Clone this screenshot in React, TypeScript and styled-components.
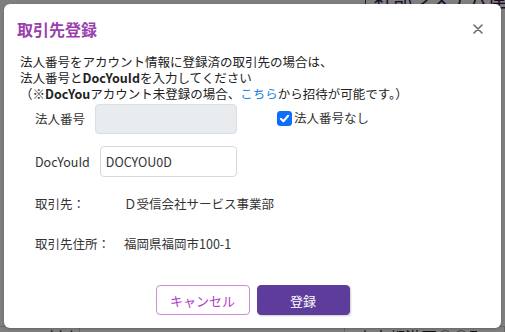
import React, { useState } from 'react';
import styled, { createGlobalStyle } from 'styled-components';

const GlobalStyle = createGlobalStyle`
    * {
        box-sizing: border-box;
    }
    html, body {
        margin: 0;
        padding: 0;
        width: 505px;
        height: 332px;
        overflow: hidden;
        font-family: 'Noto Sans CJK JP', 'Noto Sans', sans-serif;
    }
`;

const App: React.FC = () => {
    const [noCorpNumber, setNoCorpNumber] = useState(true);
    const [docYouId, setDocYouId] = useState('DOCYOU0D');

    return (
        <Page>
            <GlobalStyle />
            <BackPage>
                <BackHeader>
                    <BackTitle>社部システム連携</BackTitle>
                </BackHeader>
                <BackSpacer />
                <BackRow>
                    <BackCell $width={80}>コン 村山 様</BackCell>
                    <BackCell $width={265}></BackCell>
                    <BackCell $width={160}>東京都港区○○町</BackCell>
                </BackRow>
            </BackPage>
            <Overlay>
                <Modal>
                    <ModalHeader>
                        <ModalTitle>取引先登録</ModalTitle>
                        <CloseButton aria-label="閉じる">
                            <svg width="10" height="10" viewBox="0 0 10 10">
                                <path
                                    d="M1 1 L9 9 M9 1 L1 9"
                                    stroke="#6b6b6b"
                                    strokeWidth="1.6"
                                    strokeLinecap="round"
                                />
                            </svg>
                        </CloseButton>
                    </ModalHeader>
                    <ModalBody>
                        <Intro>
                            <p>法人番号をアカウント情報に登録済の取引先の場合は、</p>
                            <p>
                                法人番号と<b>DocYouId</b>を入力してください
                            </p>
                            <p>
                                （※<b>DocYou</b>アカウント未登録の場合、
                                <InviteLink href="#">こちら</InviteLink>
                                から招待が可能です。）
                            </p>
                        </Intro>
                        <FormArea>
                            <FieldRow $top={2}>
                                <FieldLabel>法人番号</FieldLabel>
                                <TextInput disabled value="" onChange={() => {}} />
                            </FieldRow>
                            <CheckLabel>
                                <HiddenCheck
                                    type="checkbox"
                                    checked={noCorpNumber}
                                    onChange={(e) => setNoCorpNumber(e.target.checked)}
                                />
                                <CheckBox $checked={noCorpNumber}>
                                    {noCorpNumber && (
                                        <svg width="11" height="11" viewBox="0 0 12 12">
                                            <path
                                                d="M2 6.3 L4.8 9 L10 3"
                                                fill="none"
                                                stroke="#ffffff"
                                                strokeWidth="2.2"
                                                strokeLinecap="round"
                                                strokeLinejoin="round"
                                            />
                                        </svg>
                                    )}
                                </CheckBox>
                                法人番号なし
                            </CheckLabel>
                            <FieldRow $top={12}>
                                <FieldLabel>DocYouId</FieldLabel>
                                <TextInput
                                    $tall
                                    value={docYouId}
                                    onChange={(e) => setDocYouId(e.target.value)}
                                />
                            </FieldRow>
                        </FormArea>
                        <InfoList>
                            <InfoRow $top={19}>
                                <InfoLabel>取引先：</InfoLabel>
                                <InfoValue>Ｄ受信会社サービス事業部</InfoValue>
                            </InfoRow>
                            <InfoRow $top={24}>
                                <InfoLabel>取引先住所：</InfoLabel>
                                <InfoValue>福岡県福岡市100-1</InfoValue>
                            </InfoRow>
                        </InfoList>
                    </ModalBody>
                    <ModalFooter>
                        <CancelButton>キャンセル</CancelButton>
                        <PrimaryButton>登録</PrimaryButton>
                    </ModalFooter>
                </Modal>
            </Overlay>
        </Page>
    );
};

export default App;

const Page = styled.div`
    position: relative;
    width: 505px;
    height: 332px;
    overflow: hidden;
    background-color: #ffffff;
`;

const BackPage = styled.div`
    display: flex;
    flex-direction: column;
    height: 100%;
`;

const BackHeader = styled.div`
    display: flex;
    justify-content: flex-end;
    height: 6px;
    overflow: visible;
`;

const BackTitle = styled.div`
    margin-top: -11px;
    padding: 0 0 0 8px;
    width: 140px;
    border-left: 1px solid #444;
    font-size: 19px;
    line-height: 20px;
    color: #3a0f52;
    white-space: nowrap;
`;

const BackSpacer = styled.div`
    flex: 1;
`;

const BackRow = styled.div`
    display: flex;
    height: 6px;
    border-top: 1px solid #cccccc;
`;

interface BackCellProps {
    $width: number;
}

const BackCell = styled.div<BackCellProps>`
    width: ${(props) => props.$width}px;
    padding-left: 12px;
    border-right: 1px solid #cccccc;
    font-size: 16px;
    line-height: 20px;
    color: #222;
    white-space: nowrap;
    overflow: hidden;
`;

const Overlay = styled.div`
    position: absolute;
    inset: 0;
    display: flex;
    justify-content: center;
    align-items: center;
    background-color: rgba(0, 0, 0, 0.5);
`;

const Modal = styled.section`
    display: flex;
    flex-direction: column;
    width: 497px;
    height: 324px;
    background-color: #ffffff;
    border-radius: 6px;
    box-shadow: 0 1px 3px rgba(0, 0, 0, 0.2);
`;

const ModalHeader = styled.header`
    display: flex;
    justify-content: space-between;
    align-items: center;
    padding: 16px 16px 0 13px;
`;

const ModalTitle = styled.h2`
    margin: 0;
    font-size: 16px;
    line-height: 18px;
    font-weight: 700;
    color: #9a3fad;
`;

const CloseButton = styled.button`
    display: flex;
    align-items: center;
    justify-content: center;
    width: 14px;
    height: 14px;
    padding: 0;
    border: none;
    background: transparent;
    cursor: pointer;
`;

const ModalBody = styled.div`
    flex: 1;
    padding: 0 16px;
`;

const Intro = styled.div`
    margin-top: 16px;
    font-size: 12.5px;
    line-height: 16px;
    color: #222222;

    p {
        margin: 0;
        white-space: nowrap;
    }

    b {
        font-weight: 700;
    }
`;

const InviteLink = styled.a`
    color: #1a82e2;
    text-decoration: none;
`;

const FormArea = styled.div`
    display: grid;
    grid-template-columns: 202px auto;
    column-gap: 40px;
    align-items: center;
    padding-left: 15px;
`;

interface TopProps {
    $top: number;
}

const FieldRow = styled.div<TopProps>`
    grid-column: 1;
    display: flex;
    align-items: center;
    gap: 10px;
    margin-top: ${(props) => props.$top}px;
`;

const FieldLabel = styled.label`
    font-size: 12.5px;
    line-height: 16px;
    color: #333333;
    white-space: nowrap;
`;

interface TextInputProps {
    $tall?: boolean;
}

const TextInput = styled.input<TextInputProps>`
    flex: 1;
    min-width: 0;
    height: ${(props) => (props.$tall ? '31px' : '30px')};
    padding: 0 5px;
    font-family: 'Noto Sans CJK JP', 'Noto Sans', sans-serif;
    font-size: 12.5px;
    color: #333333;
    background-color: #ffffff;
    border: 1px solid #d6d9dd;
    border-radius: 4px;
    outline: none;

    &:disabled {
        background-color: #e9ecef;
        border-color: #dadde1;
    }
`;

const CheckLabel = styled.label`
    grid-column: 2;
    grid-row: 1;
    display: flex;
    align-items: center;
    gap: 2px;
    margin-top: 2px;
    align-self: start;
    padding-top: 6px;
    font-size: 12.5px;
    line-height: 16px;
    color: #333333;
    cursor: pointer;
`;

const HiddenCheck = styled.input`
    display: none;
`;

interface CheckBoxProps {
    $checked: boolean;
}

const CheckBox = styled.span<CheckBoxProps>`
    display: flex;
    align-items: center;
    justify-content: center;
    width: 15px;
    height: 15px;
    border-radius: 3px;
    background-color: ${(props) => (props.$checked ? '#0d6efd' : '#ffffff')};
    border: 1px solid ${(props) => (props.$checked ? '#0d6efd' : '#aaaaaa')};
`;

const InfoList = styled.div`
    display: flex;
    flex-direction: column;
    padding-left: 15px;
`;

const InfoRow = styled.div<TopProps>`
    display: flex;
    margin-top: ${(props) => props.$top}px;
    font-size: 12.5px;
    line-height: 16px;
    color: #333333;
`;

const InfoLabel = styled.span`
    width: 89px;
    white-space: nowrap;
`;

const InfoValue = styled.span`
    white-space: nowrap;
`;

const ModalFooter = styled.footer`
    display: flex;
    justify-content: center;
    gap: 7px;
    padding-bottom: 13px;
`;

const BaseButton = styled.button`
    width: 94px;
    height: 30px;
    padding: 0;
    font-family: 'Noto Sans CJK JP', 'Noto Sans', sans-serif;
    font-size: 13px;
    border-radius: 4px;
    cursor: pointer;
`;

const CancelButton = styled(BaseButton)`
    color: #b23cc4;
    background-color: #ffffff;
    border: 1px solid #cf8ddb;
`;

const PrimaryButton = styled(BaseButton)`
    width: 93px;
    color: #ffffff;
    background-color: #5e3c9b;
    border: 1px solid #5e3c9b;
    box-shadow: 1px 1px 2px rgba(0, 0, 0, 0.2);
`;
